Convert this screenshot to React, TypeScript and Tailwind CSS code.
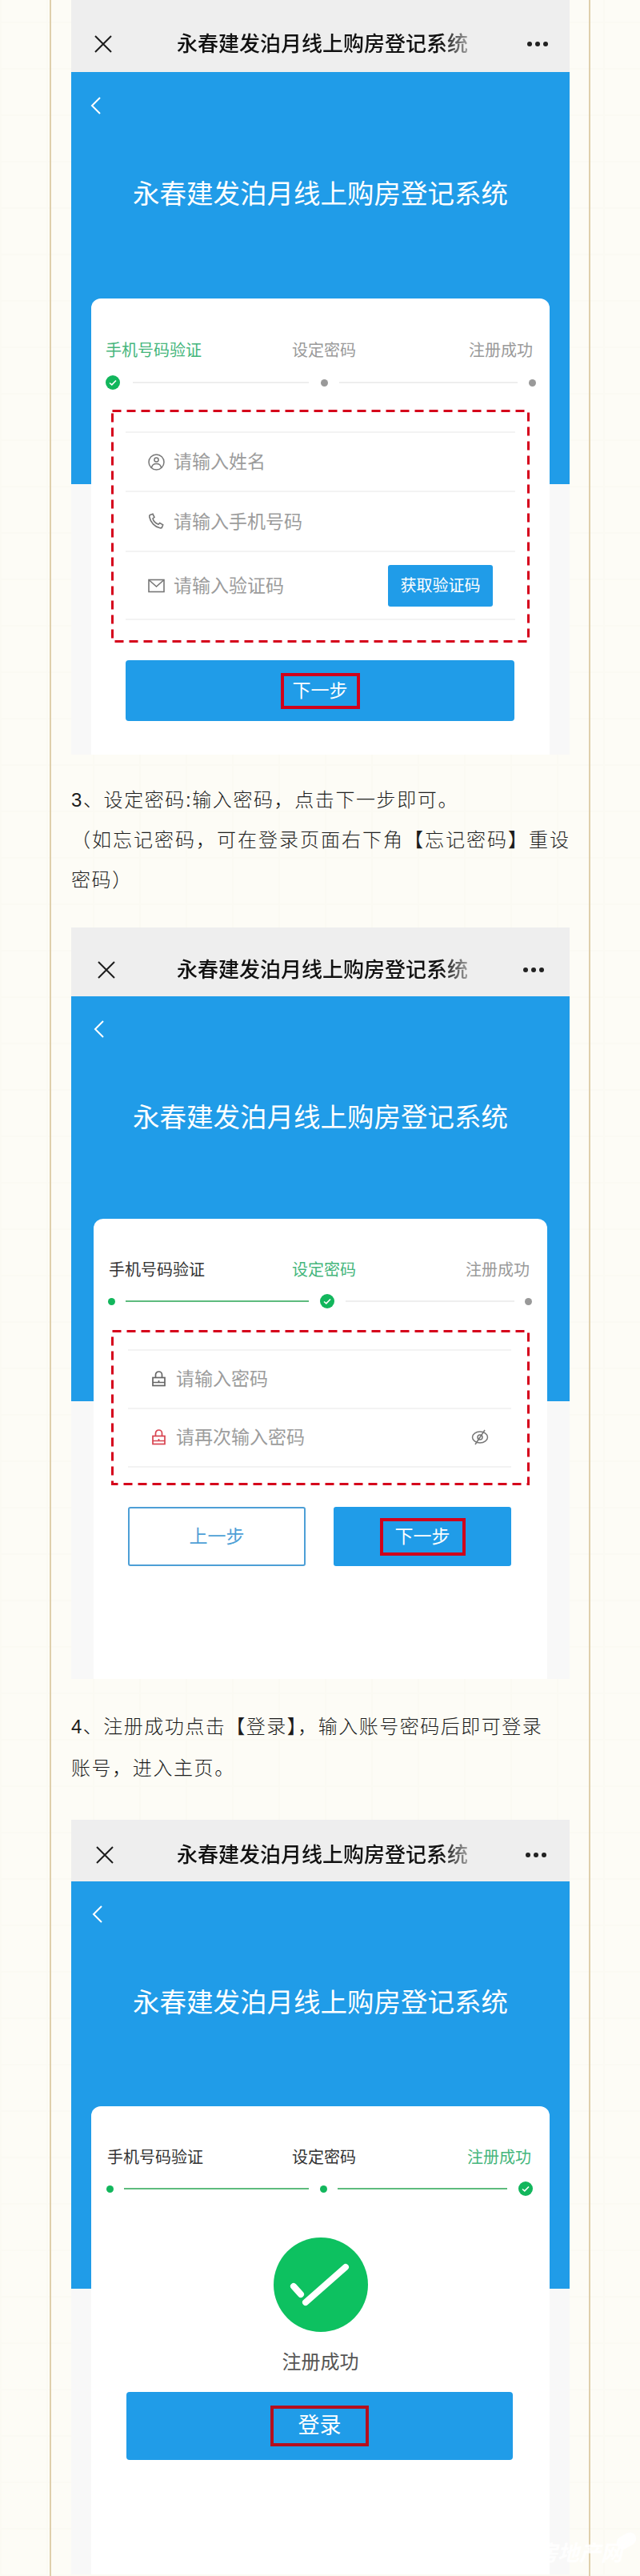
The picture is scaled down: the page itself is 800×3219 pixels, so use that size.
import type { ReactNode } from 'react';

const SYSTEM_NAME = '永春建发泊月线上购房登记系统';

const CloseIcon = () => (
  <svg width="24" height="22" viewBox="0 0 24 22" fill="none" stroke="#1c1c1c" strokeWidth="2">
    <path d="M2 1l20 20M22 1L2 21" />
  </svg>
);

const MoreIcon = () => (
  <svg width="28" height="8" viewBox="0 0 28 8" fill="#222">
    <circle cx="4" cy="4" r="3" />
    <circle cx="14" cy="4" r="3" />
    <circle cx="24" cy="4" r="3" />
  </svg>
);

const BackIcon = () => (
  <svg width="14" height="22" viewBox="0 0 14 22" fill="none" stroke="#fff" strokeWidth="2">
    <path d="M12 1L2 11l10 10" />
  </svg>
);

const UserIcon = () => (
  <svg width="21" height="21" viewBox="0 0 21 21" fill="none" stroke="#777" strokeWidth="1.5">
    <circle cx="10.5" cy="10.5" r="9.5" />
    <circle cx="10.5" cy="7.5" r="2.6" />
    <path d="M4.5 17.5c.5-3.5 3-5 6-5s5.500 1.500 6 5" />
  </svg>
);

const PhoneIcon = () => (
  <svg width="21" height="21" viewBox="0 0 21 21" fill="none" stroke="#777" strokeWidth="1.6">
    <path d="M2.500 2.500l3.500-1.200 2 4-2 1.700c.8 3 3.500 6 7 7.300l1.700-1.800 4 2.300-1.200 3.200c-.5.900-1.500 1-2.500.8C8.500 17.500 3 11.500 1.800 5c-.2-1 0-2 .7-2.500z" />
  </svg>
);

const MailIcon = () => (
  <svg width="21" height="18" viewBox="0 0 21 18" fill="none" stroke="#777" strokeWidth="1.6">
    <rect x="1" y="1.500" width="19" height="15" />
    <path d="M1.500 2l9 8 9-8" />
  </svg>
);

const LockIcon = ({ color }: { color: string }) => (
  <svg width="17" height="20" viewBox="0 0 17 20" fill="none" stroke={color} strokeWidth="1.7">
    <rect x="1" y="8.500" width="15" height="10" />
    <path d="M4.500 8.500V5a4 4 0 0 1 8 0v3.500M1 14.500h15M8.500 12v3" />
  </svg>
);

const EyeOffIcon = () => (
  <svg width="22" height="22" viewBox="0 0 22 22" fill="none" stroke="#777" strokeWidth="1.5">
    <ellipse cx="11" cy="11" rx="9.500" ry="7" />
    <circle cx="11" cy="11" r="3" />
    <path d="M17 2L5 20" />
  </svg>
);

const Dot = ({ className }: { className: string }) => (
  <span className={`size-[9px] shrink-0 rounded-full ${className}`} />
);

const Line = ({ className }: { className: string }) => (
  <span className={`h-[2px] shrink-0 ${className}`} />
);

const CheckDot = ({ className }: { className: string }) => (
  <svg className={`shrink-0 ${className}`} width="18" height="18" viewBox="0 0 18 18">
    <circle cx="9" cy="9" r="9" fill="#12b65c" />
    <path d="M5 9.500l2.800 2.300L13 6.500" fill="none" stroke="#fff" strokeWidth="1.600" />
  </svg>
);

const TopBar = ({ className, closeClass, dotsClass }: { className: string; closeClass: string; dotsClass: string }) => (
  <div className={`flex items-center bg-[#eeeeee] ${className}`}>
    <span className={closeClass}>
      <CloseIcon />
    </span>
    <span className="w-[366px] bg-gradient-to-r from-[#111] from-90% to-[#aaa] bg-clip-text text-[26px] leading-[34px] font-medium text-transparent">
      {SYSTEM_NAME}
    </span>
    <span className={`ml-auto flex ${dotsClass}`}>
      <MoreIcon />
    </span>
  </div>
);

const BlueHeader = ({ className, backClass }: { className: string; backClass: string }) => (
  <div className={`bg-[#209ce8] ${className}`}>
    <div className={backClass}>
      <BackIcon />
    </div>
    <h1 className="mt-[80px] text-center text-[33.500px] leading-[40px] font-normal text-white">{SYSTEM_NAME}</h1>
  </div>
);

const InputRow = ({
  className,
  icon,
  label,
  iconClass,
  children,
}: {
  className: string;
  icon: ReactNode;
  label: string;
  iconClass: string;
  children?: ReactNode;
}) => (
  <div className={`flex items-center border-b-2 border-[#f3f3f3] ${className}`}>
    <span className={`flex shrink-0 justify-center ${iconClass}`}>{icon}</span>
    <span className="text-[23px] leading-[30px] text-[#9c9c9c]">{label}</span>
    {children}
  </div>
);

const DashedBox = ({ w, h, className, children }: { w: number; h: number; className: string; children: ReactNode }) => (
  <div className={`relative ${className}`}>
    {children}
    <svg className="pointer-events-none absolute inset-0" width={w} height={h}>
      <rect x="1.500" y="1.500" width={w - 3} height={h - 3} fill="none" stroke="#d5001b" strokeWidth="3" strokeDasharray="11 7" />
    </svg>
  </div>
);

const Paragraph = ({ className, children }: { className: string; children: ReactNode }) => (
  <p className={`font-['Liberation_Sans','Noto_Sans_CJK_SC',sans-serif] text-[24px] leading-[50px] font-light whitespace-nowrap text-[#1c1c1c] ${className}`}>
    {children}
  </p>
);

export default function App() {
  return (
    <div className="relative h-[3219px] w-[800px] overflow-hidden bg-[#fdfcf6] bg-[repeating-linear-gradient(0deg,#fbfaf3_0_2px,transparent_2px_58px),repeating-linear-gradient(90deg,#fbfaf3_0_2px,transparent_2px_58px)] font-['Liberation_Sans','Noto_Sans_CJK_SC',sans-serif]">
      <div className="mx-[62px] h-full border-x-2 border-[#dfcfac] pr-[24px] pl-[25px]">
        {/* 第一屏：手机号码验证 */}
        <section className="h-[943px] bg-[#f8f8f8]">
          <TopBar className="h-[90px] pt-[20px]" closeClass="ml-[28px] mr-[80px] flex" dotsClass="mr-[26px]" />
          <BlueHeader className="h-[515px] pt-[31px]" backClass="pl-[24px]" />
          <div className="relative mx-[25px] mt-[-232px] h-[570px] rounded-t-[12px] bg-white pt-[51px]">
            <div className="flex pr-[21px] pl-[18px] text-[20px] leading-[28px]">
              <span className="text-[#45b67c]">手机号码验证</span>
              <span className="ml-[113px] text-[#9a9a9a]">设定密码</span>
              <span className="ml-auto text-[#9a9a9a]">注册成功</span>
            </div>
            <div className="mt-[17px] flex h-[18px] items-center pl-[18px]">
              <CheckDot className="" />
              <Line className="ml-[16px] w-[220px] bg-[#eeeeee]" />
              <Dot className="ml-[15px] bg-[#999]" />
              <Line className="ml-[14px] w-[223px] bg-[#eeeeee]" />
              <Dot className="ml-[14px] bg-[#999]" />
            </div>
            <DashedBox w={523} h={291} className="mt-[25px] ml-[25px] h-[291px] w-[523px] pt-[27px] pl-[18px]">
              <div className="w-[487px] border-t-2 border-[#f3f3f3]">
                <InputRow className="h-[74px]" icon={<UserIcon />} label="请输入姓名" iconClass="ml-[28px] mr-[11px] w-[21px]" />
                <InputRow className="h-[75px]" icon={<PhoneIcon />} label="请输入手机号码" iconClass="ml-[28px] mr-[11px] w-[21px]" />
                <InputRow className="h-[85px]" icon={<MailIcon />} label="请输入验证码" iconClass="ml-[28px] mr-[11px] w-[21px]">
                  <button className="mr-[28px] ml-auto h-[52px] w-[131px] rounded-[3px] bg-[#209ce8] text-[20px] text-white">获取验证码</button>
                </InputRow>
              </div>
            </DashedBox>
            <button className="mt-[22px] ml-[43px] flex h-[76px] w-[486px] items-center justify-center rounded-[4px] bg-[#209ce8]">
              <span className="flex h-[45px] w-[99px] items-center justify-center border-4 border-[#d0021b] text-[23px] text-white">下一步</span>
            </button>
          </div>
        </section>

        <div className="pt-[32px]">
          <Paragraph className="tracking-[1.600px]">3、设定密码:输入密码，点击下一步即可。</Paragraph>
          <Paragraph className="tracking-[2px]">（如忘记密码，可在登录页面右下角【忘记密码】重设</Paragraph>
          <Paragraph className="tracking-[1.600px]">密码）</Paragraph>
        </div>

        {/* 第二屏：设定密码 */}
        <section className="mt-[34px] h-[939px] bg-[#f8f8f8]">
          <TopBar className="h-[86px] pt-[20px]" closeClass="ml-[32px] mr-[76px] flex" dotsClass="mr-[31px]" />
          <BlueHeader className="h-[506px] pt-[30px]" backClass="pl-[28px]" />
          <div className="relative mx-[28px] mt-[-228px] h-[575px] rounded-t-[12px] bg-white pt-[50px]">
            <div className="flex pr-[22px] pl-[19px] text-[20px] leading-[28px]">
              <span className="text-[#333]">手机号码验证</span>
              <span className="ml-[109px] text-[#45b67c]">设定密码</span>
              <span className="ml-auto text-[#9a9a9a]">注册成功</span>
            </div>
            <div className="mt-[16px] flex h-[18px] items-center pl-[18px]">
              <Dot className="bg-[#12b65c]" />
              <Line className="ml-[13px] w-[229px] bg-[#5dbb7d]" />
              <CheckDot className="ml-[14px]" />
              <Line className="ml-[14px] w-[211px] bg-[#eeeeee]" />
              <Dot className="ml-[13px] bg-[#999]" />
            </div>
            <DashedBox w={523} h={194} className="mt-[27px] ml-[22px] h-[194px] w-[523px] pt-[24px] pl-[21px]">
              <div className="w-[479px] border-t-2 border-[#f3f3f3]">
                <InputRow className="h-[73px] pb-[2px]" icon={<LockIcon color="#666" />} label="请输入密码" iconClass="ml-[28px] mr-[12px] w-[20px]" />
                <InputRow className="h-[73px] pb-[2px]" icon={<LockIcon color="#d8434f" />} label="请再次输入密码" iconClass="ml-[28px] mr-[12px] w-[20px]">
                  <span className="mr-[28px] ml-auto flex">
                    <EyeOffIcon />
                  </span>
                </InputRow>
              </div>
            </DashedBox>
            <div className="mt-[27px] ml-[43px] flex gap-[35px]">
              <button className="h-[74px] w-[222px] rounded-[3px] border-2 border-[#4d9fd6] text-[23px] text-[#4d9fd6]">上一步</button>
              <button className="flex h-[74px] w-[222px] items-center justify-center rounded-[3px] bg-[#209ce8]">
                <span className="flex h-[47px] w-[107px] items-center justify-center border-4 border-[#d0021b] text-[23px] text-white">下一步</span>
              </button>
            </div>
          </div>
        </section>

        <div className="pt-[35px]">
          <Paragraph className="tracking-[1.500px]">4、注册成功点击【登录】，输入账号密码后即可登录</Paragraph>
          <Paragraph className="mt-[2px] tracking-[1.600px]">账号，进入主页。</Paragraph>
        </div>

        {/* 第三屏：注册成功 */}
        <section className="mt-[39px] h-[943px] bg-[#f8f8f8]">
          <TopBar className="h-[77px] pt-[11px]" closeClass="ml-[30px] mr-[78px] flex" dotsClass="mr-[28px]" />
          <BlueHeader className="h-[509px] pt-[30px]" backClass="pl-[26px]" />
          <div className="relative mx-[25px] mt-[-228px] h-[585px] rounded-t-[12px] bg-white pt-[50px]">
            <div className="flex pr-[23px] pl-[20px] text-[20px] leading-[28px]">
              <span className="text-[#333]">手机号码验证</span>
              <span className="ml-[111px] text-[#333]">设定密码</span>
              <span className="ml-auto text-[#45b67c]">注册成功</span>
            </div>
            <div className="mt-[16px] flex h-[18px] items-center pl-[19px]">
              <Dot className="bg-[#12b65c]" />
              <Line className="ml-[13px] w-[231px] bg-[#5dbb7d]" />
              <Dot className="ml-[14px] bg-[#12b65c]" />
              <Line className="ml-[13px] w-[212px] bg-[#5dbb7d]" />
              <CheckDot className="ml-[14px]" />
            </div>
            <svg className="mx-auto mt-[52px] block" width="118" height="118" viewBox="0 0 118 118">
              <circle cx="59" cy="59" r="59" fill="#0dc160" />
              <path d="M25 61l9 10M40 81l50-44" fill="none" stroke="#fff" strokeWidth="8" strokeLinecap="round" />
            </svg>
            <p className="mt-[22px] text-center text-[24px] leading-[32px] text-[#555]">注册成功</p>
            <button className="mt-[21px] ml-[44px] flex h-[85px] w-[483px] items-center justify-center rounded-[4px] bg-[#209ce8]">
              <span className="flex h-[51px] w-[123px] items-center justify-center border-4 border-[#b50f1e] text-[27px] text-white">登录</span>
            </button>
          </div>
        </section>
      </div>

      {/* 角标水印 */}
      <div className="absolute right-[22px] bottom-[12px] text-[27px] leading-[32px] font-bold text-white/85 italic">房地产网</div>
      <span className="absolute right-[4px] bottom-[36px] h-[16px] w-[26px] -rotate-30 rounded-full bg-white/85" />
    </div>
  );
}
